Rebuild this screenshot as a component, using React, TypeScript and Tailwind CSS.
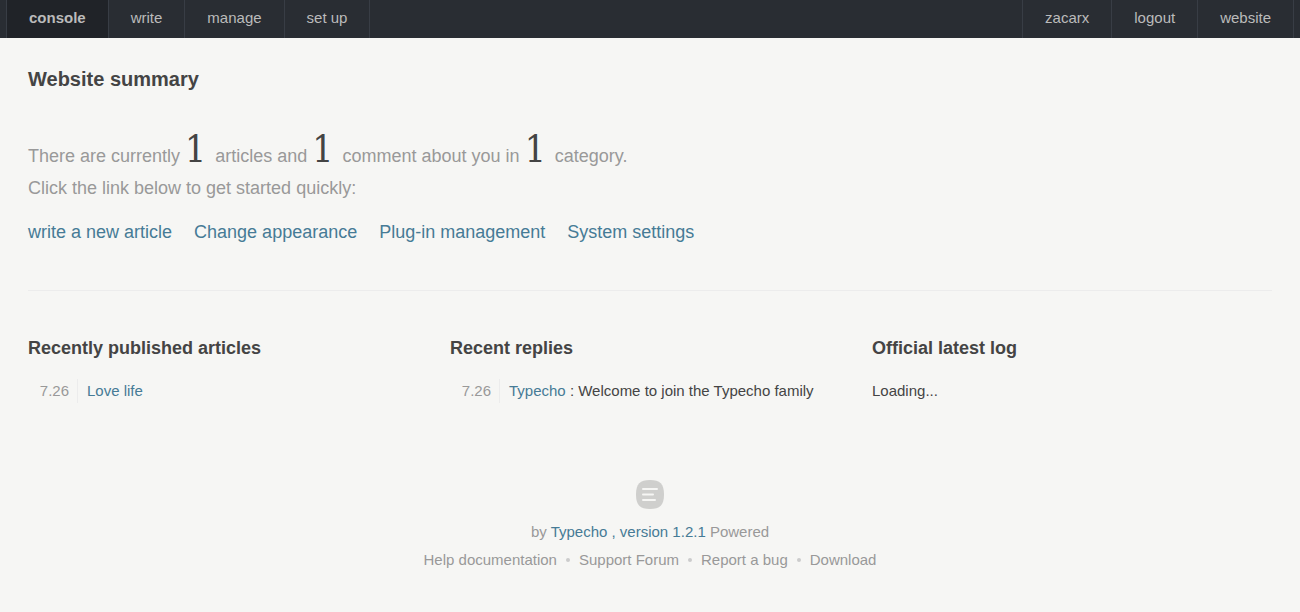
import React from "react";

type NavItem = { label: string; active?: boolean };

const mainNav: NavItem[] = [
  { label: "console", active: true },
  { label: "write" },
  { label: "manage" },
  { label: "set up" },
];
const userNav: NavItem[] = [{ label: "zacarx" }, { label: "logout" }, { label: "website" }];
const quickLinks = ["write a new article", "Change appearance", "Plug-in management", "System settings"];
const resources = ["Help documentation", "Support Forum", "Report a bug", "Download"];

function NavGroup({ items }: { items: NavItem[] }) {
  return (
    <ul className="flex border-l border-[#383d45]">
      {items.map((item) => (
        <li key={item.label}>
          <a
            href="#"
            className={
              item.active
                ? "block h-[38px] border-r border-[#383d45] bg-[#202328] px-[22px] font-bold leading-9 text-[#bbb]"
                : "block h-[38px] border-r border-[#383d45] px-[22px] leading-9 text-[#bbb]"
            }
          >
            {item.label}
          </a>
        </li>
      ))}
    </ul>
  );
}

function Count({ value }: { value: number }) {
  return (
    <em className="mr-1 font-['DejaVu_Serif_Condensed','DejaVu_Serif',serif] text-[37px] not-italic leading-8 text-[#444]">
      {value}
    </em>
  );
}

function Entry({ date, children }: { date: string; children: React.ReactNode }) {
  return (
    <li className="flex items-center">
      <span className="mr-[9px] w-[50px] border-r border-[#ececec] pr-2 text-right text-[#999]">{date}</span>
      <span>{children}</span>
    </li>
  );
}

function Panel({ title, children }: { title: string; children: React.ReactNode }) {
  return (
    <section>
      <h3 className="mb-[19px] text-lg font-bold leading-6">{title}</h3>
      <ul className="leading-6">{children}</ul>
    </section>
  );
}

export default function App() {
  return (
    <div className="min-h-screen bg-[#f6f6f4] font-['Liberation_Sans',Arial,sans-serif] text-[15px] text-[#444]">
      <nav className="flex justify-between bg-[#292d33] px-[6px]">
        <NavGroup items={mainNav} />
        <NavGroup items={userNav} />
      </nav>

      <main className="px-7 pt-[27px]">
        <h2 className="text-xl font-bold leading-7">Website summary</h2>

        <div className="mt-[41px] border-b border-[#ececec] pb-[42px] text-lg leading-8 text-[#999]">
          <p>
            There are currently <Count value={1} /> articles and <Count value={1} /> comment about you in{" "}
            <Count value={1} /> category.
            <br />
            Click the link below to get started quickly:
          </p>
          <ul className="mt-3 flex flex-wrap gap-x-[22px] text-[#467b96]">
            {quickLinks.map((label) => (
              <li key={label}>
                <a href="#">{label}</a>
              </li>
            ))}
          </ul>
        </div>

        <div className="mt-[45px] grid grid-cols-3 gap-[22px]">
          <Panel title="Recently published articles">
            <Entry date="7.26">
              <a href="#" className="text-[#467b96]">Love life</a>
            </Entry>
          </Panel>
          <Panel title="Recent replies">
            <Entry date="7.26">
              <a href="#" className="text-[#467b96]">Typecho</a> : Welcome to join the Typecho family
            </Entry>
          </Panel>
          <Panel title="Official latest log">
            <li>Loading...</li>
          </Panel>
        </div>
      </main>

      <footer className="flex flex-col items-center pb-8 pt-[77px] leading-7 text-[#999]">
        <a href="#" aria-label="Typecho">
          <svg viewBox="0 0 28 29" className="block h-[29px] w-7">
            <path
              d="M14 0C24 0 28 4 28 14.5S24 29 14 29 0 25 0 14.5 4 0 14 0Z"
              fill="#cfcfcd"
            />
            <path d="M7 9H21M7 14.5H17M7 20H19" stroke="#f6f6f4" strokeWidth="2" strokeLinecap="round" />
          </svg>
        </a>
        <p className="mt-[9px]">
          by <a href="#" className="text-[#467b96]">Typecho , version 1.2.1</a> Powered
        </p>
        <ul className="flex">
          {resources.map((label, i) => (
            <li key={label} className="flex items-center">
              {i > 0 && <span className="mx-[9px] size-1 rounded-full bg-[#ccc]" />}
              <a href="#">{label}</a>
            </li>
          ))}
        </ul>
      </footer>
    </div>
  );
}
